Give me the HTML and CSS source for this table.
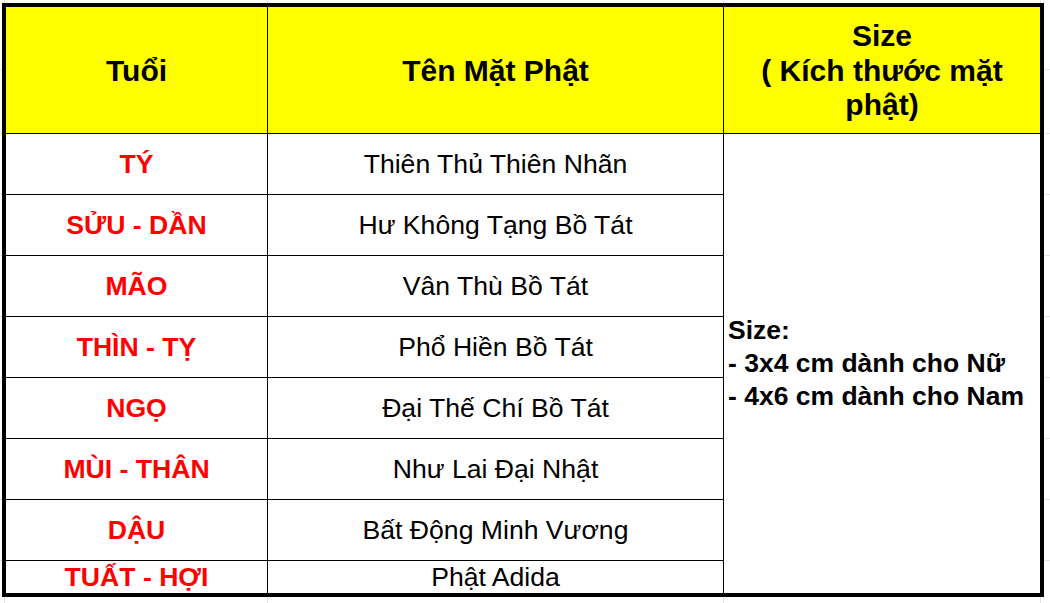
FILE: index.html
```html
<!DOCTYPE html>
<html lang="vi">
<head>
<meta charset="utf-8">
<title>Mặt Phật theo tuổi</title>
<link rel="stylesheet" href="styles.css">
</head>
<body>
<div class="sheet">
  <div class="grid">
    <div class="cell head">Tuổi</div>
    <div class="cell head">Tên Mặt Phật</div>
    <div class="cell head last-col">Size<br>( Kích thước mặt<br>phật)</div>

    <div class="cell age">TÝ</div>
    <div class="cell name">Thiên Thủ Thiên Nhãn</div>
    <div class="cell size">Size:<br>- 3x4 cm dành cho Nữ<br>- 4x6 cm dành cho Nam</div>

    <div class="cell age">SỬU - DẦN</div>
    <div class="cell name">Hư Không Tạng Bồ Tát</div>

    <div class="cell age">MÃO</div>
    <div class="cell name">Vân Thù Bồ Tát</div>

    <div class="cell age">THÌN - TỴ</div>
    <div class="cell name">Phổ Hiền Bồ Tát</div>

    <div class="cell age">NGỌ</div>
    <div class="cell name">Đại Thế Chí Bồ Tát</div>

    <div class="cell age">MÙI - THÂN</div>
    <div class="cell name">Như Lai Đại Nhật</div>

    <div class="cell age">DẬU</div>
    <div class="cell name">Bất Động Minh Vương</div>

    <div class="cell age last-row">TUẤT - HỢI</div>
    <div class="cell name last-row">Phật Adida</div>
  </div>
</div>
</body>
</html>
```

FILE: styles.css
```css
html, body {
  margin: 0;
  height: 100%;
}

body {
  background-color: #ffffff;
  background-image:
    linear-gradient(#e4e4e4, #e4e4e4),
    linear-gradient(#e4e4e4, #e4e4e4),
    linear-gradient(#e4e4e4, #e4e4e4),
    linear-gradient(#e4e4e4, #e4e4e4),
    linear-gradient(#e4e4e4, #e4e4e4),
    linear-gradient(#e4e4e4, #e4e4e4),
    linear-gradient(#e4e4e4, #e4e4e4),
    linear-gradient(#e4e4e4, #e4e4e4),
    linear-gradient(#e4e4e4, #e4e4e4),
    linear-gradient(#e4e4e4, #e4e4e4),
    linear-gradient(#e4e4e4, #e4e4e4),
    linear-gradient(#e4e4e4, #e4e4e4),
    linear-gradient(#e4e4e4, #e4e4e4);
  background-repeat: no-repeat;
  background-size:
    100% 1px, 100% 1px, 100% 1px, 100% 1px, 100% 1px,
    100% 1px, 100% 1px, 100% 1px, 100% 1px,
    1px 100%, 1px 100%, 1px 100%, 1px 100%;
  background-position:
    0 69px, 0 133px, 0 194px, 0 255px, 0 316px,
    0 377px, 0 438px, 0 499px, 0 560px,
    4px 0, 267px 0, 723px 0, 1040px 0;
  font-family: "Liberation Sans", Arial, sans-serif;
  color: #000;
}

.sheet {
  padding: 3px 0 0 2px;
}

.grid {
  display: grid;
  width: 1042px;
  box-sizing: border-box;
  border: 4px solid #000;
  background: #fff;
  grid-template-columns: 262px 456px 316px;
  grid-template-rows: 127px repeat(7, 61px) 32px;
}

.cell {
  box-sizing: border-box;
  display: flex;
  align-items: center;
  justify-content: center;
  text-align: center;
  border-right: 1px solid #000;
  border-bottom: 1px solid #000;
  white-space: nowrap;
}

.head {
  background: #ffff00;
  font-weight: bold;
  font-size: 30px;
  line-height: 34.5px;
  padding-top: 2px;
}

.last-col {
  border-right: none;
}

.age {
  color: #ff0000;
  font-weight: bold;
  font-size: 26.6px;
}

.name {
  font-size: 26.6px;
}

.last-row {
  border-bottom: none;
}

.size {
  grid-column: 3;
  grid-row: 2 / span 8;
  border-right: none;
  border-bottom: none;
  justify-content: flex-start;
  text-align: left;
  padding-left: 4px;
  font-weight: bold;
  font-size: 26.5px;
  line-height: 33px;
}
```
